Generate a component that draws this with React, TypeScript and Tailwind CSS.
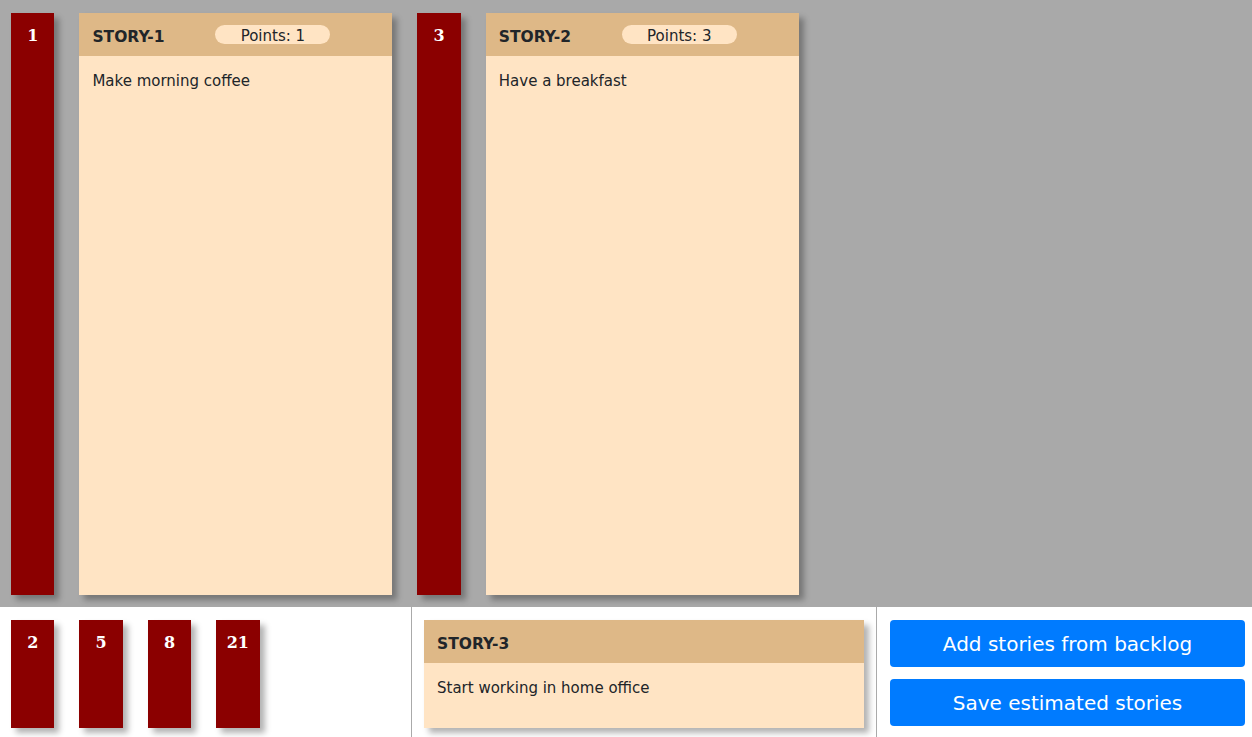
import React from "react";

type Story = { id: string; text: string; points?: number };

const estimated: { value: number; story: Story }[] = [
  { value: 1, story: { id: "STORY-1", text: "Make morning coffee", points: 1 } },
  { value: 3, story: { id: "STORY-2", text: "Have a breakfast", points: 3 } },
];

const freeValues = [2, 5, 8, 21];

function ValueBar({ value, tall }: { value: number; tall?: boolean }) {
  return (
    <div
      className={`w-[43.4px] shrink-0 bg-[#8b0000] pt-[14px] text-center text-[16px] font-bold leading-[18px] text-white shadow-[5px_5px_6px_rgba(0,0,0,0.3)] ${
        tall ? "h-full" : "h-[108px]"
      }`}
      style={{ fontFamily: '"DejaVu Serif", serif' }}
    >
      {value}
    </div>
  );
}

function StoryCard({ story, className }: { story: Story; className: string }) {
  return (
    <div className={`flex flex-col bg-[#ffe4c4] shadow-[5px_5px_6px_rgba(0,0,0,0.3)] ${className}`}>
      <div className="flex h-[43px] shrink-0 items-start bg-[#deb887] px-[13px]">
        <span className="mt-[15px] w-[123px] text-[15.5px] font-bold leading-[18px] text-[#212529]">{story.id}</span>
        {story.points !== undefined && (
          <span className="mt-[12px] flex h-[19px] w-[115px] items-center justify-center rounded-full bg-[#ffe4c4] text-[15px] text-[#212529]">
            <span className="translate-y-[2px]">Points: {story.points}</span>
          </span>
        )}
      </div>
      <div className="px-[13px] pt-[14px] text-[15px] text-[#212529]">{story.text}</div>
    </div>
  );
}

export default function App() {
  return (
    <div
      className="h-[737px] w-[1252px] overflow-hidden bg-white"
      style={{ fontFamily: '"DejaVu Sans", Verdana, sans-serif' }}
    >
      {/* Estimation board */}
      <div className="flex h-[607px] gap-[25px] bg-[#a9a9a9] pb-[12px] pl-[11px] pt-[13px]">
        {estimated.map(({ value, story }) => (
          <React.Fragment key={value}>
            <ValueBar value={value} tall />
            <StoryCard story={story} className="h-full w-[313px]" />
          </React.Fragment>
        ))}
      </div>

      {/* Bottom panel */}
      <div className="flex h-[130px]">
        <div className="flex w-[411px] gap-[25px] pl-[11px] pt-[13px]">
          {freeValues.map((v) => (
            <ValueBar key={v} value={v} />
          ))}
        </div>
        <div className="w-[465px] border-l border-[#aaaaaa] px-[12px] pt-[13px]">
          <StoryCard story={{ id: "STORY-3", text: "Start working in home office" }} className="h-[108px] w-[440px]" />
        </div>
        <div className="flex flex-1 flex-col gap-[12px] border-l border-[#aaaaaa] pl-[13px] pr-[7px] pt-[13px]">
          <button className="h-[47px] rounded-[4px] bg-[#007bff] text-[20px] text-white">Add stories from backlog</button>
          <button className="h-[47px] rounded-[4px] bg-[#007bff] text-[20px] text-white">Save estimated stories</button>
        </div>
      </div>
    </div>
  );
}
